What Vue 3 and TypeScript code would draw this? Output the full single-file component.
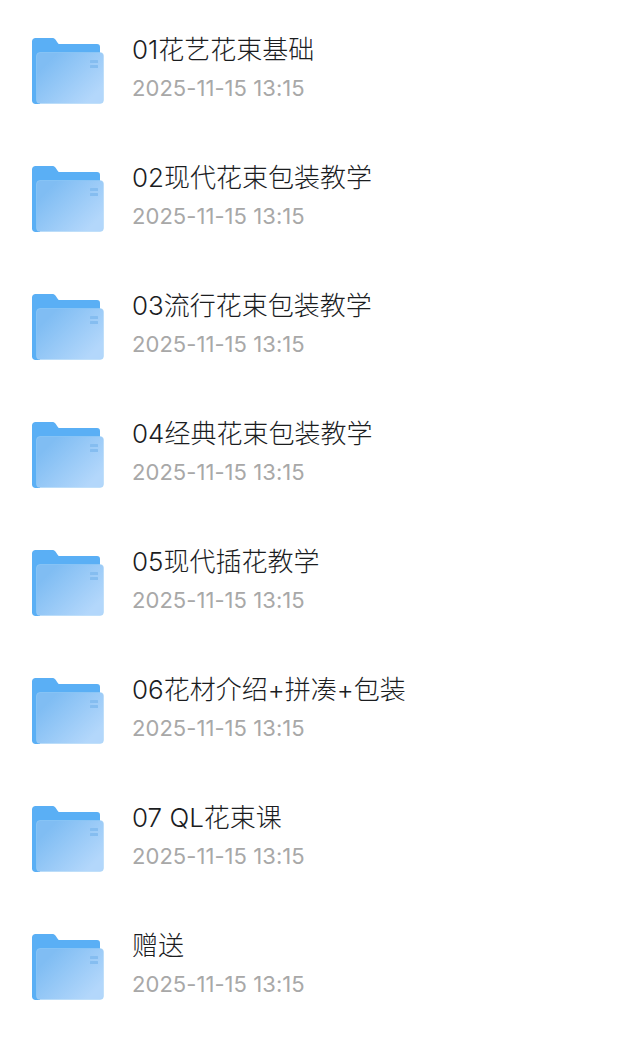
<template>
  <div class="list">
    <div v-for="f in folders" :key="f" class="row">
      <svg class="icon" width="72" height="66" viewBox="0 0 72 66">
        <defs>
          <linearGradient :id="gradId" gradientUnits="userSpaceOnUse" x1="18" y1="22" x2="58" y2="62">
            <stop offset="0" stop-color="#80bdf3" />
            <stop offset="1" stop-color="#b3d7fb" />
          </linearGradient>
        </defs>
        <path
          d="M3.5 0H20C21.8 0 22.8 .6 23.6 1.8L25.8 5C26.2 5.6 26.7 6 27.6 6H65C67 6 68 7.3 68 9V60H8V66H3.5C1.5 66 0 64.5 0 62.5V3.5C0 1.5 1.5 0 3.5 0Z"
          fill="#5aaff5"
        />
        <rect
          x="4.5"
          y="14.5"
          width="67"
          height="51"
          rx="3.5"
          :fill="`url(#${gradId})`"
          stroke="#a5d2f7"
          stroke-opacity="0.45"
        />
        <rect x="58" y="22" width="8" height="3" rx="0.5" fill="#85bdf0" />
        <rect x="58" y="27" width="8" height="3" rx="0.5" fill="#85bdf0" />
      </svg>
      <div class="text">
        <div class="name">{{ f }}</div>
        <div class="date">{{ date }}</div>
      </div>
    </div>
  </div>
</template>

<script setup lang="ts">
const gradId = 'folder-front'
const date = '2025-11-15 13:15'
const folders: string[] = [
  '01花艺花束基础',
  '02现代花束包装教学',
  '03流行花束包装教学',
  '04经典花束包装教学',
  '05现代插花教学',
  '06花材介绍+拼凑+包装',
  '07 QL花束课',
  '赠送',
]
</script>

<style>
html,
body {
  background: #fff;
}
</style>

<style scoped>
.list {
  display: flex;
  flex-direction: column;
  padding-top: 38px;
  gap: 62px;
  font-family: Inter, 'Noto Sans CJK SC', sans-serif;
}

.row {
  display: flex;
  align-items: center;
  padding-left: 32px;
  height: 66px;
}

.icon {
  flex: none;
  display: block;
}

.text {
  margin-left: 28px;
  margin-top: -4px;
  display: flex;
  flex-direction: column;
  gap: 6px;
}

.name {
  font-size: 26px;
  font-weight: 300;
  line-height: 32px;
  color: #1b1d1f;
}

.date {
  font-size: 22px;
  line-height: 32px;
  letter-spacing: 0.05px;
  color: #a8a8a8;
}
</style>
